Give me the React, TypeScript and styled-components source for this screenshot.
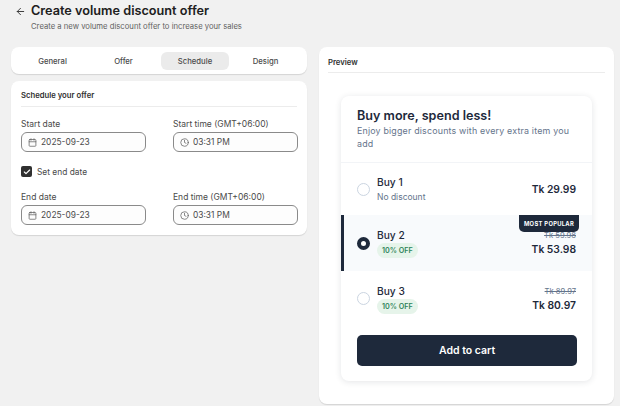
import React from 'react'
import styled, { createGlobalStyle } from 'styled-components'
import { ArrowLeft, Calendar, Clock, Check } from 'lucide-react'

const Global = createGlobalStyle`
  html, body { margin: 0; padding: 0; background: #f1f1f1; }
  body { font-family: Inter, "Liberation Sans", sans-serif; color: #303030; }
  * { box-sizing: border-box; }
`

const Page = styled.div`
  width: 620px;
  height: 406px;
  overflow: hidden;
  padding: 0 6px 0 11px;
`

const Header = styled.header`
  display: flex;
  gap: 5px;
  height: 47px;
  padding: 3px 0 0 4px;
`

const Back = styled.div`
  width: 11px;
  height: 16px;
  display: flex;
  align-items: center;
  color: #303030;
`

const Title = styled.h1`
  margin: 0;
  font-size: 12.7px;
  line-height: 16px;
  font-weight: 600;
  color: #202020;
`

const Subtitle = styled.p`
  margin: 2px 0 0;
  font-size: 7.7px;
  line-height: 12px;
  color: #616161;
`

const Columns = styled.div`
  display: grid;
  grid-template-columns: 296px 295px;
  gap: 12px;
  align-items: start;
`

const Stack = styled.div`
  display: flex;
  flex-direction: column;
  gap: 7px;
`

const Card = styled.section`
  background: #fff;
  border-radius: 8px;
  box-shadow: 0 1px 1px rgba(0, 0, 0, 0.12);
`

const Tabs = styled(Card)`
  height: 27px;
  display: grid;
  grid-template-columns: repeat(4, 71px);
  justify-content: start;
  padding: 5px 0 0 6px;
`

const Tab = styled.div<{ $active?: boolean }>`
  height: 18px;
  margin-left: ${p => (p.$active ? '2px' : '0')};
  width: ${p => (p.$active ? '68px' : 'auto')};
  border-radius: 6px;
  display: flex;
  align-items: center;
  justify-content: center;
  font-size: 7.7px;
  font-weight: 500;
  color: #4a4a4a;
  background: ${p => (p.$active ? '#ebebeb' : 'transparent')};
`

const FormCard = styled(Card)`
  height: 154px;
  padding: 10px 10px 0;
`

const SectionTitle = styled.h2`
  margin: 0;
  font-size: 7.7px;
  line-height: 10px;
  font-weight: 600;
  color: #303030;
  padding-bottom: 5px;
  border-bottom: 1px solid #ececec;
`

const FieldRow = styled.div<{ $top: number }>`
  display: grid;
  grid-template-columns: 125px 125px;
  column-gap: 27px;
  margin-top: ${p => p.$top}px;
`

const Field = styled.div`
  display: flex;
  flex-direction: column;
  gap: 2px;
`

const Label = styled.label`
  font-size: 8.5px;
  line-height: 11px;
  color: #4a4a4a;
`

const Input = styled.div`
  height: 20px;
  border: 1px solid #8a8a8a;
  border-radius: 6px;
  background: #fdfdfd;
  display: flex;
  align-items: center;
  gap: 4px;
  padding-left: 6px;
  font-size: 8.4px;
  color: #4a4a4a;
  svg { color: #616161; flex: none; }
`

const CheckRow = styled.div`
  display: flex;
  align-items: center;
  gap: 5px;
  height: 11px;
  margin-top: 14px;
  font-size: 8.4px;
  color: #4a4a4a;
`

const CheckBox = styled.span`
  width: 11px;
  height: 11px;
  border-radius: 2px;
  background: #303030;
  color: #fff;
  display: flex;
  align-items: center;
  justify-content: center;
`

const PreviewPanel = styled(Card)`
  height: 357px;
  padding: 11px 9px 0;
`

const PreviewLabel = styled.div`
  font-size: 7.7px;
  line-height: 10px;
  font-weight: 600;
  color: #303030;
  padding-bottom: 4px;
  border-bottom: 1px solid #ececec;
`

const Widget = styled.div`
  width: 251px;
  height: 285px;
  margin: 23px 0 0 13px;
  border-radius: 8px;
  background: #fff;
  box-shadow: 0 1px 6px rgba(30, 41, 59, 0.12);
  overflow: hidden;
`

const WidgetHead = styled.div`
  height: 67px;
  padding: 11px 16px 0;
  border-bottom: 1px solid #f2f4f7;
`

const WidgetTitle = styled.div`
  font-size: 12.6px;
  line-height: 17px;
  font-weight: 600;
  color: #1e293b;
`

const WidgetText = styled.div`
  font-size: 8.9px;
  line-height: 13px;
  letter-spacing: 0.02em;
  color: #64748b;
`

const Tier = styled.div<{ $selected?: boolean; $height: number }>`
  position: relative;
  height: ${p => p.$height}px;
  display: flex;
  align-items: center;
  padding: 0 16px 0 ${p => (p.$selected ? '13px' : '16px')};
  background: ${p => (p.$selected ? '#f8fafc' : '#fff')};
  border-left: ${p => (p.$selected ? '3px solid #1e293b' : 'none')};
`

const Radio = styled.span<{ $selected?: boolean }>`
  width: 13px;
  height: 13px;
  border-radius: 50%;
  border: ${p => (p.$selected ? '4px solid #1e293b' : '1px solid #cbd5e1')};
  background: #fff;
  flex: none;
`

const TierInfo = styled.div`
  margin-left: 7px;
  flex: 1;
  display: flex;
  flex-direction: column;
  align-items: flex-start;
`

const TierName = styled.div`
  font-size: 10.2px;
  line-height: 14px;
  font-weight: 500;
  color: #1e293b;
`

const TierNote = styled.div`
  font-size: 8.5px;
  line-height: 14px;
  color: #64748b;
  margin-top: 1px;
`

const Saving = styled.span`
  margin-top: 1px;
  height: 15px;
  padding: 0 5px;
  border-radius: 8px;
  background: #e6f4ea;
  color: #2f855a;
  font-size: 7.2px;
  font-weight: 600;
  display: flex;
  align-items: center;
`

const Prices = styled.div`
  display: flex;
  flex-direction: column;
  align-items: flex-end;
  gap: 1px;
`

const OldPrice = styled.div`
  font-size: 7.6px;
  line-height: 11px;
  color: #64748b;
  text-decoration: line-through;
`

const Price = styled.div`
  font-size: 10.3px;
  line-height: 14px;
  font-weight: 600;
  color: #1e293b;
`

const Badge = styled.div`
  position: absolute;
  top: 0;
  right: 13px;
  height: 17px;
  width: 60px;
  border-radius: 0 0 5px 5px;
  background: #1e293b;
  color: #fff;
  font-size: 5.8px;
  font-weight: 700;
  letter-spacing: 0.3px;
  display: flex;
  align-items: center;
  justify-content: center;
`

const CartButton = styled.div`
  margin: 9px 15px 0 16px;
  height: 31px;
  border-radius: 5px;
  background: #1e293b;
  color: #fff;
  font-size: 10.5px;
  font-weight: 600;
  display: flex;
  align-items: center;
  justify-content: center;
`

const DateField = ({ label, value }: { label: string; value: string }) => (
  <Field>
    <Label>{label}</Label>
    <Input>
      <Calendar size={9} />
      {value}
    </Input>
  </Field>
)

const TimeField = ({ label, value }: { label: string; value: string }) => (
  <Field>
    <Label>{label}</Label>
    <Input>
      <Clock size={9} />
      {value}
    </Input>
  </Field>
)

export default function App() {
  return (
    <Page>
      <Global />
      <Header>
        <Back><ArrowLeft size={11} /></Back>
        <div>
          <Title>Create volume discount offer</Title>
          <Subtitle>Create a new volume discount offer to increase your sales</Subtitle>
        </div>
      </Header>
      <Columns>
        <Stack>
          <Tabs>
            <Tab>General</Tab>
            <Tab>Offer</Tab>
            <Tab $active>Schedule</Tab>
            <Tab>Design</Tab>
          </Tabs>
          <FormCard>
            <SectionTitle>Schedule your offer</SectionTitle>
            <FieldRow $top={12}>
              <DateField label="Start date" value="2025-09-23" />
              <TimeField label="Start time (GMT+06:00)" value="03:31 PM" />
            </FieldRow>
            <CheckRow>
              <CheckBox><Check size={8} strokeWidth={3.5} /></CheckBox>
              Set end date
            </CheckRow>
            <FieldRow $top={15}>
              <DateField label="End date" value="2025-09-23" />
              <TimeField label="End time (GMT+06:00)" value="03:31 PM" />
            </FieldRow>
          </FormCard>
        </Stack>
        <PreviewPanel>
          <PreviewLabel>Preview</PreviewLabel>
          <Widget>
            <WidgetHead>
              <WidgetTitle>Buy more, spend less!</WidgetTitle>
              <WidgetText>Enjoy bigger discounts with every extra item you add</WidgetText>
            </WidgetHead>
            <Tier $height={52}>
              <Radio />
              <TierInfo>
                <TierName>Buy 1</TierName>
                <TierNote>No discount</TierNote>
              </TierInfo>
              <Prices><Price>Tk 29.99</Price></Prices>
            </Tier>
            <Tier $selected $height={56}>
              <Badge>MOST POPULAR</Badge>
              <Radio $selected />
              <TierInfo>
                <TierName>Buy 2</TierName>
                <Saving>10% OFF</Saving>
              </TierInfo>
              <Prices>
                <OldPrice>Tk 59.98</OldPrice>
                <Price>Tk 53.98</Price>
              </Prices>
            </Tier>
            <Tier $height={55}>
              <Radio />
              <TierInfo>
                <TierName>Buy 3</TierName>
                <Saving>10% OFF</Saving>
              </TierInfo>
              <Prices>
                <OldPrice>Tk 89.97</OldPrice>
                <Price>Tk 80.97</Price>
              </Prices>
            </Tier>
            <CartButton>Add to cart</CartButton>
          </Widget>
        </PreviewPanel>
      </Columns>
    </Page>
  )
}
